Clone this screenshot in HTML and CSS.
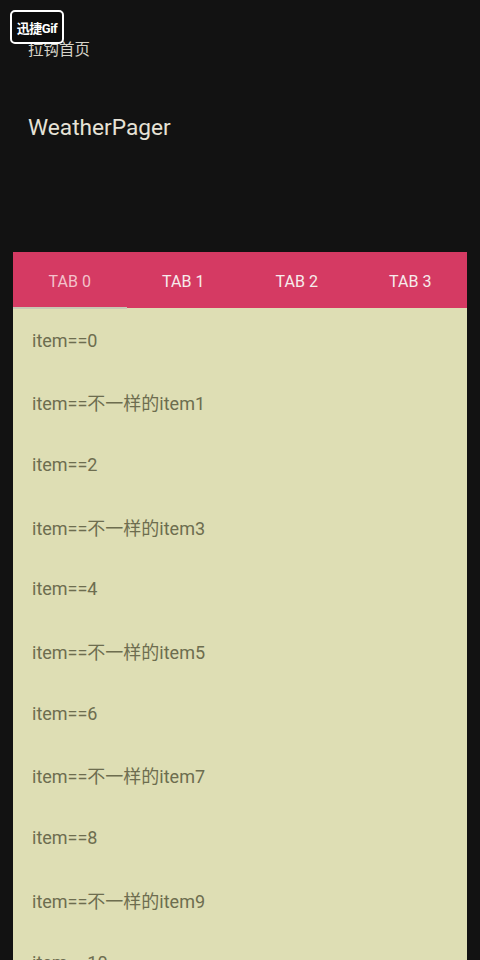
FILE: index.html
```html
<!DOCTYPE html>
<html lang="zh">
<head>
<meta charset="utf-8">
<link rel="stylesheet" href="styles.css">
</head>
<body>
<div class="badge">迅捷Gif</div>
<header class="header">
  <div class="subtitle">拉钩首页</div>
  <div class="title">WeatherPager</div>
</header>
<section class="card">
  <nav class="tabs">
    <div class="tab active">TAB 0</div>
    <div class="tab">TAB 1</div>
    <div class="tab">TAB 2</div>
    <div class="tab">TAB 3</div>
  </nav>
  <ul class="list">
    <li>item==0</li>
    <li>item==不一样的item1</li>
    <li>item==2</li>
    <li>item==不一样的item3</li>
    <li>item==4</li>
    <li>item==不一样的item5</li>
    <li>item==6</li>
    <li>item==不一样的item7</li>
    <li>item==8</li>
    <li>item==不一样的item9</li>
    <li>item==10</li>
  </ul>
</section>
</body>
</html>
```
FILE: styles.css
```css
html, body {
  margin: 0;
  padding: 0;
  height: 960px;
  overflow: hidden;
}
body {
  background: #121212;
  font-family: Roboto, "Noto Sans CJK SC", sans-serif;
  position: relative;
}
.badge {
  position: absolute;
  left: 10px;
  top: 10px;
  width: 50px;
  height: 30px;
  border: 2px solid #fff;
  border-radius: 5px;
  background: #0c0c0c;
  color: #fff;
  font-size: 13px;
  font-weight: bold;
  display: flex;
  align-items: center;
  justify-content: center;
  box-sizing: content-box;
  letter-spacing: -0.5px;
}
.header {
  padding: 40px 0 0 28px;
  height: 252px;
  box-sizing: border-box;
}
.subtitle {
  color: #d6d3c8;
  font-size: 15.5px;
  line-height: 20px;
}
.title {
  margin-top: 54px;
  color: #e6e2d6;
  font-size: 22.7px;
  line-height: 28px;
}
.card {
  margin: 0 13px;
  background: #dedeb4;
  height: 708px;
  overflow: hidden;
}
.tabs {
  display: grid;
  grid-template-columns: repeat(4, 1fr);
  height: 56px;
  background: #d53a63;
  position: relative;
}
.tab {
  display: flex;
  align-items: center;
  justify-content: center;
  color: #f6ecec;
  font-size: 16px;
  padding-top: 2px;
}
.tab.active {
  color: #f3c2cc;
  position: relative;
}
.tab.active::after {
  content: "";
  position: absolute;
  left: 0;
  right: 0;
  bottom: -1px;
  height: 2px;
  background: #c8c8b4;
}
.list {
  list-style: none;
  margin: 0;
  padding: 1px 0 0;
}
.list li {
  height: 62.2px;
  display: flex;
  align-items: center;
  padding-left: 19px;
  color: #6d6d4f;
  font-size: 18px;
}
.list li:last-child {
  padding-top: 1px;
}
```
